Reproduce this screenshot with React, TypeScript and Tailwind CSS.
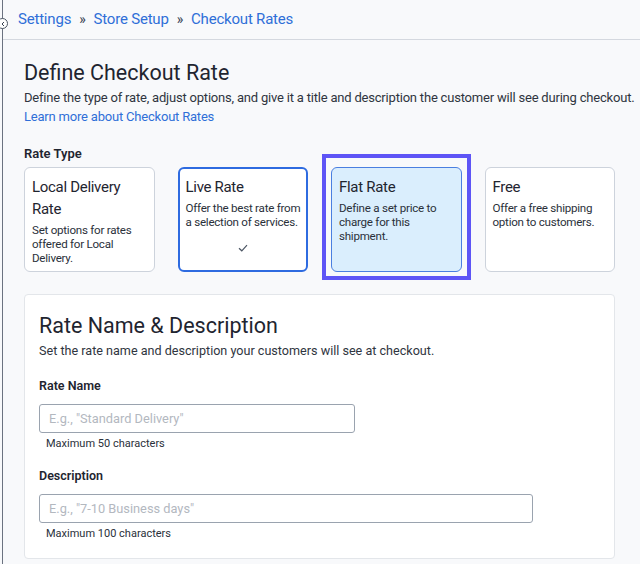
import React from 'react';

interface RateOption {
  id: string;
  title: string;
  description: string;
}

const rateOptions: RateOption[] = [
  { id: 'local', title: 'Local Delivery Rate', description: 'Set options for rates offered for Local Delivery.' },
  { id: 'live', title: 'Live Rate', description: 'Offer the best rate from a selection of services.' },
  { id: 'flat', title: 'Flat Rate', description: 'Define a set price to charge for this shipment.' },
  { id: 'free', title: 'Free', description: 'Offer a free shipping option to customers.' },
];

const RateCard: React.FC<{ option: RateOption; selected: boolean; focused: boolean; checked: boolean }> = ({
  option,
  selected,
  focused,
  checked,
}) => {
  let cls = 'bg-white border border-[#cdd3dc]';
  if (selected) cls = 'bg-[#daeefd] border border-[#4a7fe0]';
  if (checked) cls = 'bg-white border-2 border-[#2e6be0]';

  return (
    <div className="relative">
      {/* focus ring */}
      {focused && (
        <div className="absolute left-[-9px] right-[-9px] top-[-13px] bottom-[-8px] border-[4px] border-[#5e55f6] pointer-events-none" />
      )}
      <div className={`h-[105px] rounded-[6px] ${cls} ${checked ? 'pl-[6px] pr-[2px] pt-[7px]' : 'pl-[7px] pr-[3px] pt-[8px]'} flex flex-col`}>
        <div className="text-[15px] leading-[22px] tracking-[-0.3px] text-[#1f2530]">{option.title}</div>
        <div className="mt-[3px] text-[11.6px] leading-[14px] tracking-[-0.25px] text-[#2a303a]">{option.description}</div>
        {checked && (
          <div className="flex justify-center mt-[15px] pr-[4px]">
            <svg width="10" height="8" viewBox="0 0 10 8" fill="none" stroke="#4b5563" strokeWidth="1.2">
              <path d="M1 4.2 L3.8 6.8 L9 1.2" />
            </svg>
          </div>
        )}
      </div>
    </div>
  );
};

export default function App() {
  return (
    <div className="min-h-[564px] w-[640px] bg-[#f8f9fb] text-[#1f2530] relative overflow-hidden" style={{ fontFamily: 'Roboto, "Noto Sans", sans-serif' }}>
      {/* left sidebar edge */}
      <div className="absolute left-[2px] top-0 bottom-0 w-px bg-[#6b7280]" />
      <div className="absolute left-[-3px] top-[18px] w-[11px] h-[11px] rounded-full border border-[#4b5563] bg-white flex items-center justify-center">
        <svg width="6" height="6" viewBox="0 0 6 6" fill="none" stroke="#374151" strokeWidth="1">
          <path d="M4 1 L2 3 L4 5" />
        </svg>
      </div>

      {/* breadcrumb */}
      <div className="h-[40px] ml-[2px] border-b border-[#d4d8df] flex items-center pl-[16px] text-[15px] tracking-[-0.2px] text-[#2f6fd8]">
        <span>Settings</span>
        <span className="mx-[8px] text-[#374151] text-[14px]">»</span>
        <span>Store Setup</span>
        <span className="mx-[8px] text-[#374151] text-[14px]">»</span>
        <span>Checkout Rates</span>
      </div>

      <div className="pl-[24px] pr-[25px]">
        <h1 className="mt-[20px] text-[21.5px] leading-[26px] text-[#1f2530]">Define Checkout Rate</h1>
        <p className="mt-[3px] text-[13px] leading-[18px] tracking-[-0.2px] text-[#2f3540] whitespace-nowrap">
          Define the type of rate, adjust options, and give it a title and description the customer will see during checkout.
        </p>
        <a className="block text-[13px] leading-[20px] tracking-[-0.2px] text-[#2f6fd8]">Learn more about Checkout Rates</a>

        <div className="mt-[19px] text-[13px] font-semibold leading-[16px]">Rate Type</div>
        <div className="mt-[5px] grid grid-cols-4 gap-x-[23px] w-[591px]">
          {rateOptions.map((o) => (
            <RateCard key={o.id} option={o} selected={o.id === 'flat'} focused={o.id === 'flat'} checked={o.id === 'live'} />
          ))}
        </div>

        <div className="mt-[22px] w-[591px] bg-white border border-[#e3e6ea] rounded-[4px] pl-[14px] pt-[18px] pb-[17px]">
          <h2 className="text-[21.5px] leading-[26px] text-[#1f2530]">Rate Name &amp; Description</h2>
          <p className="mt-[4px] text-[12.6px] leading-[16px] text-[#2f3540]">
            Set the rate name and description your customers will see at checkout.
          </p>

          <label className="block mt-[19px] text-[12.5px] font-semibold leading-[16px]">Rate Name</label>
          <input
            className="block mt-[10px] w-[316px] h-[29px] rounded-[3px] border border-[#9aa3af] px-[9px] text-[12.8px] placeholder:text-[#b3b8bf] outline-none"
            placeholder={'E.g., "Standard Delivery"'}
          />
          <div className="mt-[4px] ml-[7px] text-[11px] leading-[14px] text-[#2a303a]">Maximum 50 characters</div>

          <label className="block mt-[17px] text-[12.5px] font-semibold leading-[16px]">Description</label>
          <input
            className="block mt-[10px] w-[494px] h-[29px] rounded-[3px] border border-[#9aa3af] px-[9px] text-[12.8px] placeholder:text-[#b3b8bf] outline-none"
            placeholder={'E.g., "7-10 Business days"'}
          />
          <div className="mt-[4px] ml-[7px] text-[11px] leading-[14px] text-[#2a303a]">Maximum 100 characters</div>
        </div>
      </div>
    </div>
  );
}
